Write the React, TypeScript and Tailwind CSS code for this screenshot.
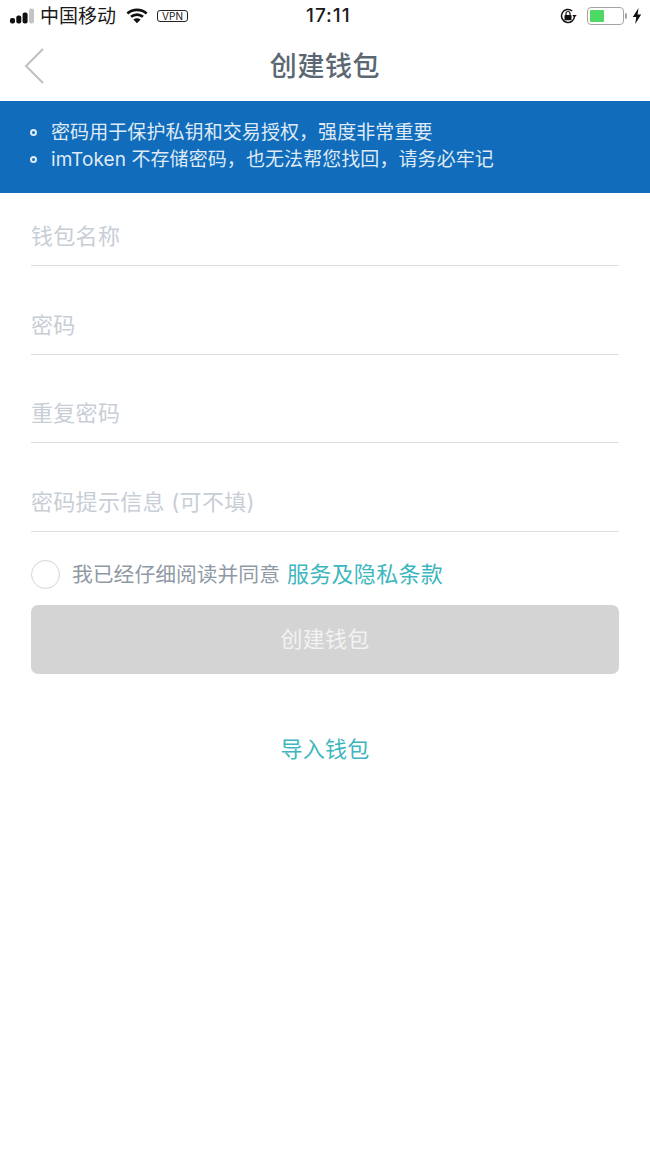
const FIELDS = ["钱包名称", "密码", "重复密码", "密码提示信息 (可不填)"];

const NOTES = [
  "密码用于保护私钥和交易授权，强度非常重要",
  "imToken 不存储密码，也无法帮您找回，请务必牢记",
];

const font = "font-['Inter','Noto_Sans_CJK_SC',sans-serif]";

const StatusBar = () => (
  <div className="relative flex h-[32px] items-center justify-between pl-[10px] pr-[8px] text-[#1a1a1a]">
    <div className="flex items-center">
      <svg width="24" height="16" viewBox="0 0 24 16" className="mr-[6px]">
        <rect x="0" y="10" width="5" height="5.5" rx="2" fill="#111" />
        <rect x="6.3" y="7.5" width="5" height="8" rx="2" fill="#111" />
        <rect x="12.6" y="4.5" width="5" height="11" rx="2" fill="#111" />
        <rect x="19" y="0.5" width="5" height="15" rx="2" fill="#c4c4c4" />
      </svg>
      <span className="text-[19px] leading-none">中国移动</span>
      <svg width="22" height="16" viewBox="0 0 24 16" className="ml-[10px]">
        <path d="M1.5 5.2C7.5 0 16.5 0 22.5 5.2" fill="none" stroke="#111" strokeWidth="3" />
        <path d="M5.5 8.8C9.2 5.6 14.8 5.6 18.5 8.8" fill="none" stroke="#111" strokeWidth="3" />
        <path d="M8 11.8C10.4 10 13.6 10 16 11.8L12 15.8Z" fill="#111" />
      </svg>
      <div className="ml-[9px] flex h-[12px] w-[31px] items-center justify-center rounded-[3px] border border-[#222] text-[10px] leading-none">
        VPN
      </div>
    </div>
    <span className="absolute left-[306px] top-[6px] text-[19px] font-medium leading-[20px] tracking-[1px]">17:11</span>
    <div className="flex items-center">
      <svg width="18" height="18" viewBox="0 0 18 18" className="mr-[10px]">
        <path d="M15.5 9A6.5 6.5 0 1 1 13.2 4" fill="none" stroke="#111" strokeWidth="1.5" />
        <path d="M15.5 10.5L17.8 8H13.2Z" fill="#111" />
        <rect x="5.5" y="8" width="7" height="5.2" rx="0.8" fill="#111" />
        <path d="M7 8V6.5a2 2 0 0 1 4 0V8" fill="none" stroke="#111" strokeWidth="1.2" />
      </svg>
      <div className="flex h-[18px] w-[37px] items-center rounded-[4px] border border-[#a3a3a3] p-[2px]">
        <div className="h-full w-[14px] rounded-[1px] bg-[#4cd964]" />
      </div>
      <div className="ml-[1px] mr-[5px] h-[6px] w-[2px] rounded-r-full bg-[#a3a3a3]" />
      <svg width="10" height="16" viewBox="0 0 10 16">
        <path d="M6.5 0L0.8 9H4.3L3.2 16L9.2 6.6H5.6Z" fill="#111" />
      </svg>
    </div>
  </div>
);

const NavBar = () => (
  <div className="relative flex h-[69px] items-center justify-center">
    <svg width="22" height="38" viewBox="0 0 22 38" className="absolute left-[23px] top-[15px]">
      <path d="M20 2L3 19L20 36" fill="none" stroke="#bcc1c6" strokeWidth="2" />
    </svg>
    <h1 className="text-[27px] font-medium leading-none tracking-[0.6px] text-[#5b6773]">创建钱包</h1>
  </div>
);

export default function App() {
  return (
    <div className={`flex min-h-[1156px] w-[650px] flex-col bg-white ${font}`}>
      <StatusBar />
      <NavBar />

      <div className="flex h-[92px] flex-col bg-[#116cbc] pl-[30px] pt-[18px] text-[19px] leading-[27px] tracking-[0.08px] text-[#dfeaf5]">
        {NOTES.map((note) => (
          <div key={note} className="flex items-center">
            <span className="mr-[14px] h-[7px] w-[7px] rounded-full border-2 border-[#dfeaf5]" />
            <span>{note}</span>
          </div>
        ))}
      </div>

      <div className="flex flex-col px-[31px]">
        {FIELDS.map((field) => (
          <div
            key={field}
            className="flex h-[88.5px] items-end border-b border-[#dcdfe2] pb-[13px] text-[22px] leading-[32px] tracking-[0.3px] text-[#c8ced6] first:h-[73px]"
          >
            {field}
          </div>
        ))}

        <div className="mt-[28px] flex h-[30px] items-center">
          <span className="h-[29px] w-[29px] rounded-full border border-[#d2d5d9]" />
          <span className="ml-[12px] text-[20.8px] text-[#8f9aa5]">我已经仔细阅读并同意</span>
          <span className="ml-[7px] text-[22px] tracking-[0.3px] text-[#3db6be]">服务及隐私条款</span>
        </div>

        <button className="mt-[15px] h-[69px] rounded-[7px] bg-[#d4d4d4] text-[22px] tracking-[0.3px] text-[#f2f2f2]">
          创建钱包
        </button>

        <div className="mt-[59px] text-center text-[22px] leading-[32px] tracking-[0.3px] text-[#3db6be]">导入钱包</div>
      </div>
    </div>
  );
}
